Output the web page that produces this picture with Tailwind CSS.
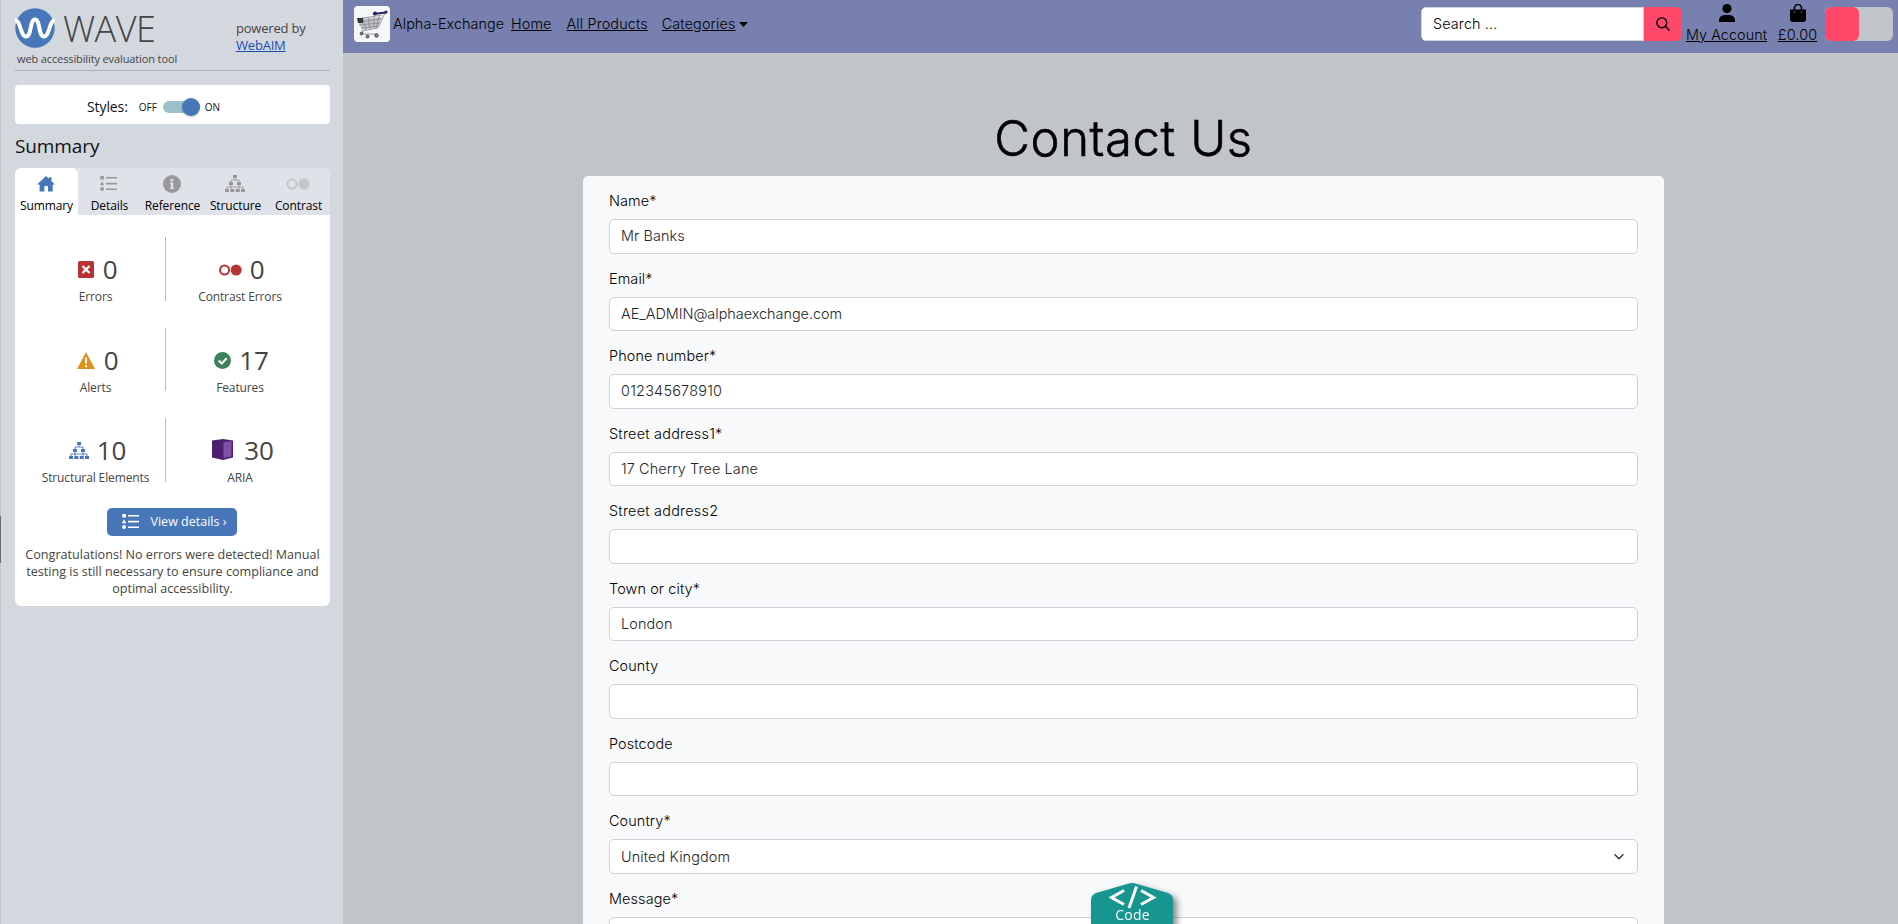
<!DOCTYPE html>
<html lang="en">
<head>
<meta charset="utf-8">
<title>Contact Us</title>
<script src="https://cdn.jsdelivr.net/npm/@tailwindcss/browser@4"></script>
</head>
<body class="flex h-[924px] w-[1898px] overflow-hidden bg-[#c1c5c9] font-['Inter',sans-serif] text-[14.4px] font-light tracking-[0.12px] text-black">
<svg class="hidden">
  <symbol id="tree" viewBox="0 0 20 17"><path d="M8 0h4v3H8zM4 7h4v3H4zM12 7h4v3h-4zM0 14h4v3H0zM5.300 14h4v3h-4zM10.700 14h4v3h-4zM16 14h4v3h-4z" fill="currentColor"/><path d="M10 3v2M6 7V5h8v2M6 10v4M14 10v4M2 14v-2h16v2" fill="none" stroke="currentColor" stroke-width=".9"/></symbol>
  <symbol id="list" viewBox="0 0 17 15"><path d="M.3 0h3.600v3.600H.3zM2 5.200l2.300 4.100H-.2zM6 1h11v1.600H6zM6 6.800h11v1.600H6zM6 12.400h11V14H6z" fill="currentColor"/><circle cx="2.100" cy="13" r="1.900" fill="currentColor"/></symbol>
</svg>

<aside class="flex h-full w-[343px] shrink-0 flex-col border-l border-[#c4c7ca] bg-[#d3d8df] pr-[13px] pl-[14px] font-['Open_Sans',sans-serif] font-normal tracking-normal text-[#444]">
  <header class="flex h-[71px] shrink-0 justify-between border-b border-[#a9afba]">
    <div class="flex flex-col pt-[8px]">
      <div class="flex h-10 items-center">
        <svg class="h-10 w-10" viewBox="0 0 40 40"><circle cx="20" cy="20" r="19.700" fill="#4777b8"/><path d="M0 12.500C6 11.500 5 28.500 11 28.500S14.500 11.500 20 11.500 23 28.500 29 28.500 34 11.500 40 12.500" fill="none" stroke="#fff" stroke-width="4"/></svg>
        <span class="ml-2 pt-[2px] text-[36px] leading-10 font-light tracking-[-0.5px]">WAVE</span>
      </div>
      <span class="ml-0.5 text-[11px] leading-[22px] tracking-[-0.12px]">web accessibility evaluation tool</span>
    </div>
    <div class="w-[94px] pt-5 text-[13px] leading-[17px] tracking-[-0.2px]">powered by<br><a class="text-[#1a4db3] underline">WebAIM</a></div>
  </header>
  <div class="mt-[14px] flex h-[39px] shrink-0 items-center rounded bg-white pt-1 pl-[72px] text-[#111]">
    <span class="text-[14px] tracking-[-0.1px]">Styles:</span>
    <span class="ml-[11px] pt-px text-[10px]">OFF</span>
    <span class="ml-[6px] flex h-3 w-[37px] items-center justify-end rounded-full bg-[#9bc0cb]"><span class="h-[18px] w-[18px] rounded-full bg-[#4777b8] shadow-[0_1px_2px_rgba(0,0,0,.25)]"></span></span>
    <span class="ml-[5px] pt-px text-[10px]">ON</span>
  </div>
  <h2 class="mt-[7px] h-[37px] shrink-0 text-[19px] leading-[30px] tracking-[-0.1px] text-[#111]">Summary</h2>
  <section class="flex h-[438px] shrink-0 flex-col overflow-hidden rounded-md bg-white">
    <nav class="grid h-[47px] shrink-0 grid-cols-5 bg-[#dfe2e8] text-center text-[12px] tracking-[-0.1px] text-black [&_svg]:mr-[2px]">
      <div class="flex flex-col items-center rounded-t-md bg-white"><div class="flex h-[31px] items-center"><svg class="h-4 w-[18px] text-[#4777b8]" viewBox="0 0 18 16"><path d="M9 0l3 2.800V1.200h2.500v4L18 8.500h-2.300V15.500H11V10H7.400v5.500H2.600v-7H0z" fill="currentColor"/></svg></div><span class="leading-[14px]">Summary</span></div>
      <div class="flex flex-col items-center"><div class="flex h-[31px] items-center"><svg class="h-[15px] w-[17px] text-[#999]"><use href="#list"/></svg></div><span class="leading-[14px]">Details</span></div>
      <div class="flex flex-col items-center"><div class="flex h-[31px] items-center"><svg class="h-[18px] w-[18px]" viewBox="0 0 18 18"><circle cx="9" cy="9" r="9" fill="#999"/><path d="M7.700 4h2.600v2.200H7.700zM7 7.400h3.200v5.300h1v1.400H6.900v-1.400h1V8.800H7z" fill="#dfe2e8"/></svg></div><span class="leading-[14px]">Reference</span></div>
      <div class="flex flex-col items-center"><div class="flex h-[31px] items-center"><svg class="h-[17px] w-5 text-[#999]"><use href="#tree"/></svg></div><span class="leading-[14px]">Structure</span></div>
      <div class="flex flex-col items-center"><div class="flex h-[31px] items-center"><svg class="h-3 w-6" viewBox="0 0 24 12"><circle cx="6" cy="6" r="4.600" fill="none" stroke="#c4c6c9" stroke-width="2"/><circle cx="18" cy="6" r="5.700" fill="#c4c6c9"/></svg></div><span class="leading-[14px]">Contrast</span></div>
    </nav>
    <div class="mt-[22px] grid shrink-0 grid-cols-[140px_148px] gap-y-[27px] pl-[11px] tracking-[-0.12px]">
      <div class="flex h-[63.500px] flex-col items-center border-r border-[#bbb] pt-[15px]"><div class="flex h-[35px] items-center gap-[9px] pl-1"><svg class="h-[17px] w-4" viewBox="0 0 16 17"><rect width="16" height="17" rx="1.500" fill="#b93236"/><path d="M4.500 5l7 7m0-7l-7 7" stroke="#fff" stroke-width="2.200"/></svg><span class="text-[26px]">0</span></div><span class="text-[12px] leading-5">Errors</span></div>
      <div class="flex h-[63.500px] flex-col items-center pt-[15px]"><div class="flex h-[35px] items-center gap-2 pl-[3px]"><svg class="h-3 w-[23px]" viewBox="0 0 23 12"><circle cx="5.600" cy="6" r="4.500" fill="none" stroke="#b93236" stroke-width="2"/><circle cx="17.200" cy="6" r="5.500" fill="#b93236"/></svg><span class="text-[26px]">0</span></div><span class="text-[12px] leading-5">Contrast Errors</span></div>
      <div class="flex h-[63.500px] flex-col items-center border-r border-[#bbb] pt-[15px]"><div class="flex h-[35px] items-center gap-[9px] pl-1"><svg class="h-[17px] w-[18px]" viewBox="0 0 18 17"><path d="M9 0l9 17H0z" fill="#e08f1c"/><path d="M9 5.500v6M9 13v2.200" stroke="#fff" stroke-width="2"/></svg><span class="text-[26px]">0</span></div><span class="text-[12px] leading-5">Alerts</span></div>
      <div class="flex h-[63.500px] flex-col items-center pt-[15px]"><div class="flex h-[35px] items-center gap-2 pl-[3px]"><svg class="h-[17px] w-[17px]" viewBox="0 0 17 17"><circle cx="8.500" cy="8.500" r="8.500" fill="#3f805e"/><path d="M4.700 8.500l3 3 5-5.300" fill="none" stroke="#fff" stroke-width="2"/></svg><span class="text-[26px]">17</span></div><span class="text-[12px] leading-5">Features</span></div>
      <div class="flex h-[63.500px] flex-col items-center border-r border-[#bbb] pt-[15px]"><div class="flex h-[35px] items-center gap-2 pl-[4px]"><svg class="h-[17px] w-5 text-[#4777b8]"><use href="#tree"/></svg><span class="text-[26px]">10</span></div><span class="text-[12px] leading-5">Structural Elements</span></div>
      <div class="flex h-[63.500px] flex-col items-center pt-[15px]"><div class="flex h-[35px] items-center gap-[11px] pl-[6px]"><svg class="-mt-[3px] h-[21px] w-[21px]" viewBox="0 0 21 21"><path d="M0 1.500L11 0l10 1.500v17L11 21 0 18.500z" fill="#4b216f"/><path d="M11.500 3.200l8-1.200v15.300l-8 2z" fill="#8050a5"/></svg><span class="text-[26px]">30</span></div><span class="text-[12px] leading-5">ARIA</span></div>
    </div>
    <button class="mt-[26px] mr-[2px] flex h-7 w-[130px] shrink-0 items-center self-center rounded-[5px] bg-[#4777b8] pl-[15px] text-[12.500px] text-white"><svg class="mr-3 h-[15px] w-[17px]"><use href="#list"/></svg><span class="pt-px">View details ›</span></button>
    <p class="mt-[10px] text-center text-[12.600px] leading-[17px] whitespace-nowrap">Congratulations! No errors were detected! Manual<br>testing is still necessary to ensure compliance and<br>optimal accessibility.</p>
  </section>
</aside>

<div class="flex min-w-0 flex-1 flex-col">
  <nav class="flex h-[53px] shrink-0 items-start bg-[#7780af] pr-[5px] pl-[11px]">
    <svg class="mt-1.5 h-9 w-9" viewBox="0 0 36 36"><rect width="36" height="36" rx="4" fill="#f5f7fb"/><path d="M3 13l25-2-4 10-16 3z" fill="#c3c4c8"/><path d="M3 13l25-4M4 16l23-3M5 19l21-2M7 22l17-2M9 12l3 12M14 11l2 12M20 10v12M25 10l-3 12M8 25l16-3 7-15M9 25l-1 3h15" fill="none" stroke="#85868d" stroke-width=".8"/><path d="M3 12h6v5H4z" fill="#34363f"/><path d="M19 8l13-1.500" stroke="#24285f" stroke-width="1.800"/><circle cx="21" cy="7.500" r="1.900" fill="#24285f"/><circle cx="32" cy="6" r="1.600" fill="#24285f"/><g fill="#888" stroke="#444"><circle cx="7.500" cy="27.500" r="1.400"/><circle cx="13.500" cy="30.500" r="1.500"/><circle cx="22.500" cy="29.500" r="1.700"/></g></svg>
    <div class="ml-[3px] flex h-12 items-center whitespace-nowrap">
      <span class="w-[111px] tracking-[0.05px]">Alpha-Exchange</span>
      <a class="ml-[7px] underline">Home</a>
      <a class="ml-[15px] underline">All Products</a>
      <a class="ml-[14px] underline">Categories</a>
      <svg class="ml-[4px] h-[5px] w-[9px]" viewBox="0 0 9 5"><path d="M0 0h9L4.500 5z"/></svg>
    </div>
    <div class="mt-[7px] ml-auto flex h-[34px] w-[261px] overflow-hidden rounded-md">
      <div class="flex flex-1 items-center border border-[#ced4da] bg-white pl-[11px]">Search ...</div>
      <div class="flex w-[38px] items-center justify-center bg-[#ff4769]"><svg class="h-[14px] w-[14px]" viewBox="0 0 14 14" fill="none" stroke="#000" stroke-width="1.400"><circle cx="5.800" cy="5.800" r="4.900"/><path d="M9.300 9.300L13.500 13.500"/></svg></div>
    </div>
    <a class="ml-1 flex w-[81px] flex-col items-center pt-1 whitespace-nowrap"><svg class="h-[18px] w-4" viewBox="0 0 16 18"><circle cx="8" cy="4.600" r="4.600"/><path d="M0 18v-1.500A5.500 5.500 0 015.500 11h5a5.500 5.500 0 015.500 5.500V18z"/></svg><span class="leading-[26px] tracking-[0.05px] underline">My Account</span></a>
    <a class="ml-[11px] flex w-[39px] flex-col items-center pt-1"><svg class="h-[18px] w-4" viewBox="0 0 16 18"><path d="M0 5.500h16V15a3 3 0 01-3 3H3a3 3 0 01-3-3z"/><path d="M4.500 7V4a3.500 3.500 0 017 0v3" fill="none" stroke="#000" stroke-width="1.600"/><path d="M3.800 7.500h1.500v1H3.800zM10.700 7.500h1.500v1h-1.500z" fill="#7780af"/></svg><span class="leading-[26px] underline">£0.00</span></a>
    <div class="mt-[7px] ml-2 h-[34px] w-[68px] overflow-hidden rounded-md bg-[#c1c5c9]"><div class="h-full w-[34px] rounded-md bg-[#ff4769]"></div></div>
  </nav>
  <main class="flex min-h-0 flex-1 flex-col items-center overflow-hidden pl-[6px]">
    <h1 class="mt-[56px] h-[67px] shrink-0 text-[49px] leading-[60px] tracking-[0.6px] [-webkit-text-stroke:0.6px_black]">Contact Us</h1>
    <form class="flex w-[1081px] shrink-0 flex-col rounded-[5px] bg-[#f8f9fb] px-[26px] pt-[14px] *:h-[77.500px] *:shrink-0">
      <div><label class="block h-[29px] leading-[22px]">Name*</label><div class="flex h-[34.500px] items-center rounded-[5px] border border-[#ced1d6] bg-white pl-[11px] text-[#212529]">Mr Banks</div></div>
      <div><label class="block h-[29px] leading-[22px]">Email*</label><div class="flex h-[34.500px] items-center rounded-[5px] border border-[#ced1d6] bg-white pl-[11px] tracking-[0px] text-[#212529]">AE_ADMIN@alphaexchange.com</div></div>
      <div><label class="block h-[29px] leading-[22px]">Phone number*</label><div class="flex h-[34.500px] items-center rounded-[5px] border border-[#ced1d6] bg-white pl-[11px] tracking-[0.25px] text-[#212529]">012345678910</div></div>
      <div><label class="block h-[29px] leading-[22px] tracking-[0.25px]">Street address1*</label><div class="flex h-[34.500px] items-center rounded-[5px] border border-[#ced1d6] bg-white pl-[11px] text-[#212529]">17 Cherry Tree Lane</div></div>
      <div><label class="block h-[29px] leading-[22px] tracking-[0.25px]">Street address2</label><div class="h-[34.500px] rounded-[5px] border border-[#ced1d6] bg-white"></div></div>
      <div><label class="block h-[29px] leading-[22px]">Town or city*</label><div class="flex h-[34.500px] items-center rounded-[5px] border border-[#ced1d6] bg-white pl-[11px] text-[#212529]">London</div></div>
      <div><label class="block h-[29px] leading-[22px]">County</label><div class="h-[34.500px] rounded-[5px] border border-[#ced1d6] bg-white"></div></div>
      <div><label class="block h-[29px] leading-[22px]">Postcode</label><div class="h-[34.500px] rounded-[5px] border border-[#ced1d6] bg-white"></div></div>
      <div><label class="block h-[29px] leading-[22px]">Country*</label><div class="flex h-[34.500px] items-center justify-between rounded-[5px] border border-[#ced1d6] bg-white pt-px pr-[13px] pl-[11px] text-[#212529]">United Kingdom<svg class="h-[6px] w-[10px]" viewBox="0 0 10 6"><path d="M1 .8l4 4 4-4" fill="none" stroke="#343a40" stroke-width="1.500" stroke-linecap="round" stroke-linejoin="round"/></svg></div></div>
      <div><label class="block h-[29px] leading-[22px]">Message*</label><div class="h-[60px] rounded-[5px] border border-[#ced1d6] bg-white"></div></div>
    </form>
  </main>
</div>

<div class="fixed top-[516px] left-0 h-[47px] w-px bg-[#6b6d70]"></div>
<div class="fixed top-[883px] left-[1091px] h-[60px] w-[82px] text-center font-['Open_Sans',sans-serif] text-[14px] font-normal tracking-normal text-white">
  <svg class="absolute top-0 left-0 h-[60px] w-[82px] overflow-visible drop-shadow-[4px_3px_3px_rgba(0,0,0,.45)]" viewBox="0 0 82 60"><path d="M0 60V17q0-5 5-7L37 .7q4-1.300 8 0L77 10q5 2 5 7v43z" fill="#17968f"/><path d="M33 7.500L20.500 14.500 33 21.500M50 7.500l12.500 7L50 21.500M45.500 3.500L38 25" fill="none" stroke="#fff" stroke-width="3"/></svg>
  <span class="relative top-[22px] block pl-px leading-5 tracking-[0.2px]">Code</span>
</div>
</body>
</html>
